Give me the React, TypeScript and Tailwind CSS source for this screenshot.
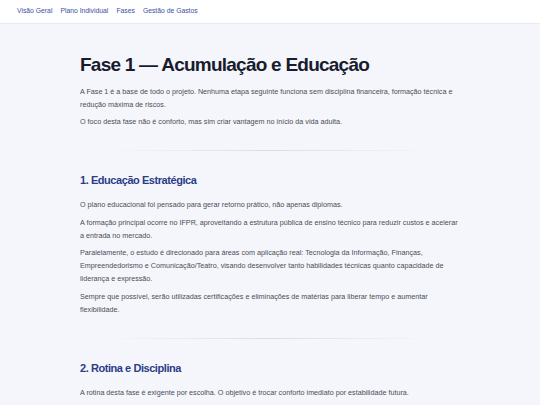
const sections = [
  {
    title: '1. Educação Estratégica',
    paragraphs: [
      'O plano educacional foi pensado para gerar retorno prático, não apenas diplomas.',
      'A formação principal ocorre no IFPR, aproveitando a estrutura pública de ensino técnico para reduzir custos e acelerar a entrada no mercado.',
      'Paralelamente, o estudo é direcionado para áreas com aplicação real: Tecnologia da Informação, Finanças, Empreendedorismo e Comunicação/Teatro, visando desenvolver tanto habilidades técnicas quanto capacidade de liderança e expressão.',
      'Sempre que possível, serão utilizadas certificações e eliminações de matérias para liberar tempo e aumentar flexibilidade.',
    ],
  },
  {
    title: '2. Rotina e Disciplina',
    paragraphs: [
      'A rotina desta fase é exigente por escolha. O objetivo é trocar conforto imediato por estabilidade futura.',
    ],
  },
];

const links = ['Visão Geral', 'Plano Individual', 'Fases', 'Gestão de Gastos'];

function Divider() {
  return (
    <div className="mx-[26px] h-px bg-gradient-to-r from-transparent via-[#d9ddeb] to-transparent" />
  );
}

export default function App() {
  return (
    <div
      className="min-h-[405px] bg-[#f5f6fb] text-[#4a4d57]"
      style={{ fontFamily: '"Liberation Sans", Arial, sans-serif' }}
    >
      <nav className="flex h-[24px] items-center gap-[8px] border-b border-[#e8eaf1] bg-white px-[17px]">
        {links.map((l) => (
          <a key={l} className="text-[6.8px] text-[#3d4fa6]">
            {l}
          </a>
        ))}
      </nav>

      <main className="mx-auto w-[380px] pt-[29px]">
        <h1 className="text-[19px] font-bold leading-[24px] tracking-[-0.04em] text-[#181c2e]">
          Fase 1 — Acumulação e Educação
        </h1>
        <div className="mt-[7.5px] flex flex-col gap-[4.5px] text-[7.2px] leading-[13px]">
          <p>
            A Fase 1 é a base de todo o projeto. Nenhuma etapa seguinte funciona sem disciplina financeira, formação técnica e redução máxima de riscos.
          </p>
          <p>O foco desta fase não é conforto, mas sim criar vantagem no início da vida adulta.</p>
        </div>

        {sections.map((s) => (
          <section key={s.title}>
            <div className="pt-[22px] pb-[21px]">
              <Divider />
            </div>
            <h2 className="text-[11px] font-bold leading-[16px] tracking-[-0.04em] text-[#2b3c88]">{s.title}</h2>
            <div className="mt-[10px] flex flex-col gap-[4.5px] text-[7.2px] leading-[13px]">
              {s.paragraphs.map((p) => (
                <p key={p}>{p}</p>
              ))}
            </div>
          </section>
        ))}
      </main>
    </div>
  );
}
